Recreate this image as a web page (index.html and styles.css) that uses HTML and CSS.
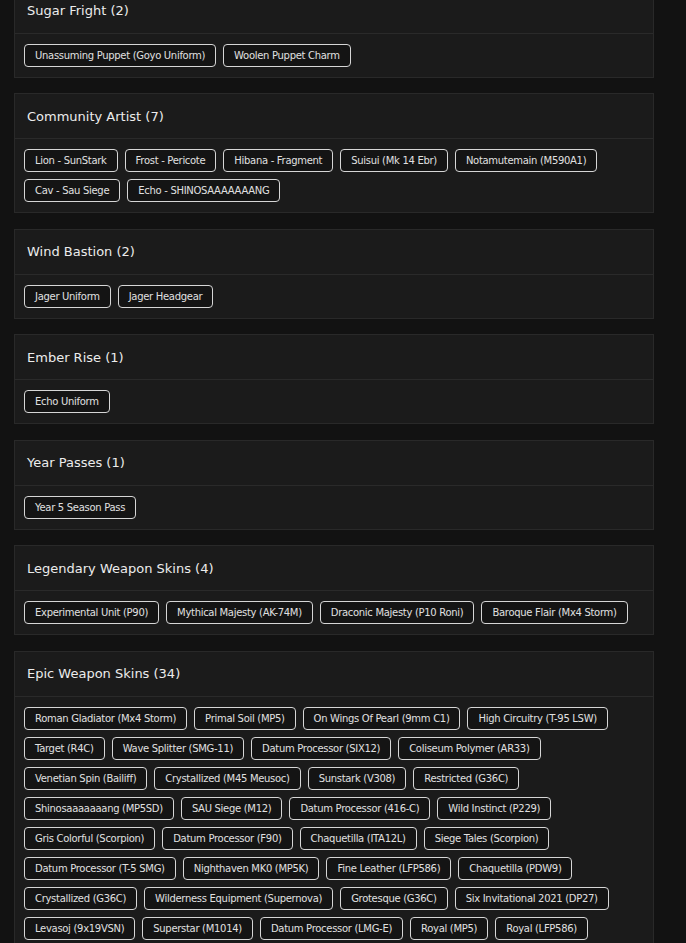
FILE: index.html
```html
<!DOCTYPE html>
<html lang="en">
<head>
    <meta charset="UTF-8">
    <meta name="viewport" content="width=device-width, initial-scale=1.0">
    <title>Inventory</title>
    <link rel="stylesheet" href="styles.css">
</head>
<body>
    <div class="container">
        <div class="card">
            <div class="card-header">Sugar Fright (2)</div>
            <div class="card-body">
                <span class="tag">Unassuming Puppet (Goyo Uniform)</span>
                <span class="tag">Woolen Puppet Charm</span>
            </div>
        </div>

        <div class="card">
            <div class="card-header">Community Artist (7)</div>
            <div class="card-body">
                <span class="tag">Lion - SunStark</span>
                <span class="tag">Frost - Pericote</span>
                <span class="tag">Hibana - Fragment</span>
                <span class="tag">Suisui (Mk 14 Ebr)</span>
                <span class="tag">Notamutemain (M590A1)</span>
                <span class="tag">Cav - Sau Siege</span>
                <span class="tag">Echo - SHINOSAAAAAAANG</span>
            </div>
        </div>

        <div class="card">
            <div class="card-header">Wind Bastion (2)</div>
            <div class="card-body">
                <span class="tag">Jager Uniform</span>
                <span class="tag">Jager Headgear</span>
            </div>
        </div>

        <div class="card">
            <div class="card-header">Ember Rise (1)</div>
            <div class="card-body">
                <span class="tag">Echo Uniform</span>
            </div>
        </div>

        <div class="card">
            <div class="card-header">Year Passes (1)</div>
            <div class="card-body">
                <span class="tag">Year 5 Season Pass</span>
            </div>
        </div>

        <div class="card">
            <div class="card-header">Legendary Weapon Skins (4)</div>
            <div class="card-body">
                <span class="tag">Experimental Unit (P90)</span>
                <span class="tag">Mythical Majesty (AK-74M)</span>
                <span class="tag">Draconic Majesty (P10 Roni)</span>
                <span class="tag">Baroque Flair (Mx4 Storm)</span>
            </div>
        </div>

        <div class="card">
            <div class="card-header">Epic Weapon Skins (34)</div>
            <div class="card-body">
                <span class="tag">Roman Gladiator (Mx4 Storm)</span>
                <span class="tag">Primal Soil (MP5)</span>
                <span class="tag">On Wings Of Pearl (9mm C1)</span>
                <span class="tag">High Circuitry (T-95 LSW)</span>
                <span class="tag">Target (R4C)</span>
                <span class="tag">Wave Splitter (SMG-11)</span>
                <span class="tag">Datum Processor (SIX12)</span>
                <span class="tag">Coliseum Polymer (AR33)</span>
                <span class="tag">Venetian Spin (Bailiff)</span>
                <span class="tag">Crystallized (M45 Meusoc)</span>
                <span class="tag">Sunstark (V308)</span>
                <span class="tag">Restricted (G36C)</span>
                <span class="tag">Shinosaaaaaaang (MP5SD)</span>
                <span class="tag">SAU Siege (M12)</span>
                <span class="tag">Datum Processor (416-C)</span>
                <span class="tag">Wild Instinct (P229)</span>
                <span class="tag">Gris Colorful (Scorpion)</span>
                <span class="tag">Datum Processor (F90)</span>
                <span class="tag">Chaquetilla (ITA12L)</span>
                <span class="tag">Siege Tales (Scorpion)</span>
                <span class="tag">Datum Processor (T-5 SMG)</span>
                <span class="tag">Nighthaven MK0 (MP5K)</span>
                <span class="tag">Fine Leather (LFP586)</span>
                <span class="tag">Chaquetilla (PDW9)</span>
                <span class="tag">Crystallized (G36C)</span>
                <span class="tag">Wilderness Equipment (Supernova)</span>
                <span class="tag">Grotesque (G36C)</span>
                <span class="tag">Six Invitational 2021 (DP27)</span>
                <span class="tag">Levasoj (9x19VSN)</span>
                <span class="tag">Superstar (M1014)</span>
                <span class="tag">Datum Processor (LMG-E)</span>
                <span class="tag">Royal (MP5)</span>
                <span class="tag">Royal (LFP586)</span>
                <span class="tag">Sunstark (SMG-12)</span>
            </div>
        </div>
    </div>
</body>
</html>
```

FILE: styles.css
```css
* {
    box-sizing: border-box;
    margin: 0;
    padding: 0;
}

body {
    background: #121212;
    color: #e2e2e2;
    font-family: 'DejaVu Sans', sans-serif;
    overflow: hidden;
}

.container {
    width: 640px;
    margin-left: 14px;
    margin-top: -12.5px;
}

.card {
    background: #1b1b1b;
    border: 1px solid #292929;
    margin-bottom: 15.5px;
}

.card-header {
    height: 45px;
    padding: 0 12px;
    display: flex;
    align-items: center;
    border-bottom: 1px solid #2a2a2a;
    font-size: 13px;
    font-weight: 500;
    color: #ececec;
}

.card-body {
    padding: 10px 9px;
    display: flex;
    flex-wrap: wrap;
    gap: 7px 7px;
}

.tag {
    height: 23px;
    line-height: 21px;
    padding: 0 10px;
    border: 1px solid #d6d6d6;
    border-radius: 4px;
    background: #141414;
    font-size: 10px;
    letter-spacing: -0.3px;
    color: #e0e0e0;
    white-space: nowrap;
}
```
